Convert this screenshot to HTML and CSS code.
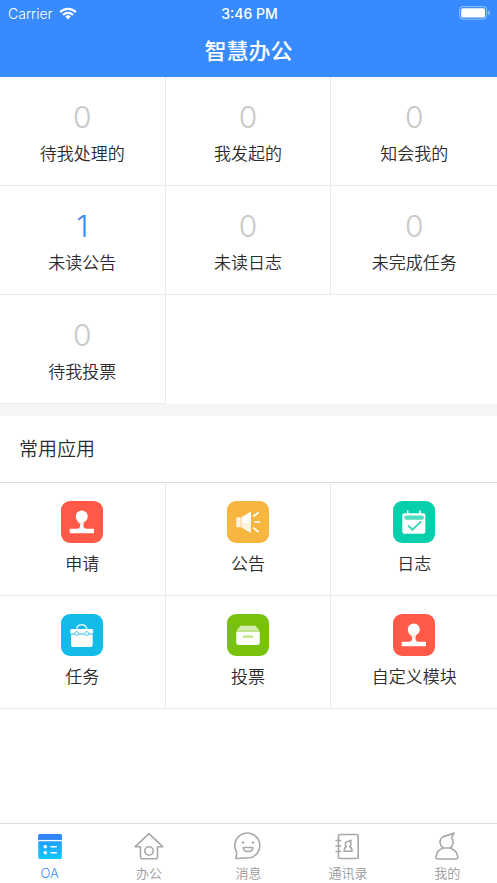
FILE: index.html
```html
<!DOCTYPE html>
<html lang="zh-CN">
<head>
<meta charset="utf-8">
<meta name="viewport" content="width=device-width, initial-scale=1">
<title>智慧办公</title>
<link rel="stylesheet" href="styles.css">
</head>
<body>
<header class="header">
  <div class="status">
    <div class="carrier"><span>Carrier</span>
      <svg width="18" height="13" viewBox="0 0 18 13" fill="none" stroke="#fff" stroke-width="2.3"><path d="M1.2 5.1a11 11 0 0 1 15.6 0M4 8a7 7 0 0 1 10 0"/><path d="M9 12.4 6.2 9.6a4 4 0 0 1 5.6 0z" fill="#fff" stroke="none"/></svg>
    </div>
    <div class="time">3:46 PM</div>
    <svg class="battery" width="32" height="14" viewBox="0 0 32 14"><rect x=".6" y=".6" width="27" height="12.6" rx="3.2" fill="none" stroke="#fff" stroke-opacity=".45"/><rect x="2.2" y="2.2" width="23.8" height="9.4" rx="1.7" fill="#fff"/><path d="M29.3 4.5c2 .8 2 4 0 4.8z" fill="#fff" fill-opacity=".5"/></svg>
  </div>
  <h1 class="title">智慧办公</h1>
</header>
<main class="main">
  <section class="grid stats">
    <a class="cell stat" href="#"><span class="count">0</span><span class="label">待我处理的</span></a>
    <a class="cell stat" href="#"><span class="count">0</span><span class="label">我发起的</span></a>
    <a class="cell stat" href="#"><span class="count">0</span><span class="label">知会我的</span></a>
    <a class="cell stat" href="#"><span class="count active">1</span><span class="label">未读公告</span></a>
    <a class="cell stat" href="#"><span class="count">0</span><span class="label">未读日志</span></a>
    <a class="cell stat" href="#"><span class="count">0</span><span class="label">未完成任务</span></a>
    <a class="cell stat" href="#"><span class="count">0</span><span class="label">待我投票</span></a>
  </section>
  <section class="apps">
    <h2 class="heading">常用应用</h2>
    <div class="grid">
      <a class="cell app" href="#">
        <svg class="app-icon red" viewBox="0 0 42 42"><path d="M8.700 32.300v-4.500h7c2.500 0 3.500-1.300 3.500-3.800 0-1.500-.2-2.400-.8-3.300h4.800c-.6.900-.8 1.800-.8 3.300 0 2.500 1 3.800 3.500 3.800H33v4.500z" fill="#fff"/><circle cx="20.800" cy="15.500" r="6" fill="#fff"/><path d="M14.800 15.500a6 6 0 0 0 8.400 5.500c-.6.800-.8 1.600-.8 3-5-.5-7.600-5-7.600-8.500" fill="#ffe3df"/></svg>
        <span class="label">申请</span></a>
      <a class="cell app" href="#">
        <svg class="app-icon amber" viewBox="0 0 42 42"><path d="M14.500 16.300 24 10.500V32l-9.500-5.700z" fill="#fff"/><path d="M9.300 16.300h4.500v10H9.300zM14.500 22H24v10l-9.500-5.700z" fill="#fef3e1"/><path d="m26.700 15.200 4.300-3.400M28 21h4.700m-6 6 4.300 3.700" stroke="#fff" stroke-width="1.700" stroke-linecap="round"/></svg>
        <span class="label">公告</span></a>
      <a class="cell app" href="#">
        <svg class="app-icon green" viewBox="0 0 42 42"><rect x="9.300" y="12.300" width="23" height="20.400" rx="2" fill="#fff"/><path d="M14.700 10v4M27 10v4" stroke="#fff" stroke-width="1.500" stroke-linecap="round"/><rect x="11.300" y="14.500" width="19.500" height="4.200" rx="1.800" fill="#50debf"/><path d="m15 24.300 4.500 4.400 8.700-8.300" fill="none" stroke="#35d6b2" stroke-width="1.800"/></svg>
        <span class="label">日志</span></a>
      <a class="cell app" href="#">
        <svg class="app-icon blue" viewBox="0 0 42 42"><path d="M15.700 15.200c0-6 10-6 10 0" fill="none" stroke="#d8f4fc" stroke-width="1.500"/><rect x="9.200" y="15" width="23" height="4.700" rx="1.500" fill="#fff"/><path d="M10 20.500h21.700V31a2 2 0 0 1-2 2H12a2 2 0 0 1-2-2z" fill="#fff"/><path d="M10 19.900h21.700" stroke="#7bd8f3" stroke-width="1"/><g fill="#fff" stroke="#4dcaed"><circle cx="15.700" cy="19.500" r="1.900"/><circle cx="25.700" cy="19.500" r="1.900"/></g></svg>
        <span class="label">任务</span></a>
      <a class="cell app" href="#">
        <svg class="app-icon lime" viewBox="0 0 42 42"><path d="M13.700 11.700h14.600l4.400 5H9.300z" fill="#d5edb0"/><path d="M9.300 17.500h23.400V29a2 2 0 0 1-2 2H11.300a2 2 0 0 1-2-2z" fill="#fff"/><rect x="16" y="21.300" width="10" height="2.700" rx=".5" fill="#c9e997"/></svg>
        <span class="label">投票</span></a>
      <a class="cell app" href="#">
        <svg class="app-icon red" viewBox="0 0 42 42"><path d="M8.700 32.300v-4.500h7c2.500 0 3.500-1.300 3.500-3.800 0-1.500-.2-2.400-.8-3.300h4.800c-.6.900-.8 1.800-.8 3.300 0 2.500 1 3.800 3.500 3.800H33v4.500z" fill="#fff"/><circle cx="20.800" cy="15.500" r="6" fill="#fff"/><path d="M14.800 15.500a6 6 0 0 0 8.400 5.500c-.6.800-.8 1.600-.8 3-5-.5-7.600-5-7.600-8.500" fill="#ffe3df"/></svg>
        <span class="label">自定义模块</span></a>
    </div>
  </section>
</main>
<nav class="tabs">
  <a class="tab current" href="#">
    <svg class="tab-icon" viewBox="0 0 30 30"><defs><linearGradient id="oa" x2="0" y2="1"><stop offset="0" stop-color="#2f86ff"/><stop offset=".3" stop-color="#20a1ff"/><stop offset="1" stop-color="#0cc8ff"/></linearGradient></defs><rect x="3.300" y="2" width="23.500" height="25" rx="1.500" fill="url(#oa)"/><path d="M3.300 8V3.500A1.500 1.500 0 0 1 4.800 2h20.500a1.500 1.500 0 0 1 1.500 1.500V8z" fill="#3287ff"/><path d="M3.300 8.600h23.500" stroke="#fff" stroke-width="1.300"/><g fill="#fff"><circle cx="10.300" cy="14.700" r="1.800"/><circle cx="10.300" cy="20.700" r="1.800"/></g><path d="M16 14.700h5.300M16 20.700h5.300" stroke="#fff" stroke-width="1.500" stroke-linecap="round"/></svg>
    <span>OA</span></a>
  <a class="tab" href="#">
    <svg class="tab-icon line" viewBox="0 0 30 30"><path d="M6.500 14.700H1.200L15 1.700l13.800 13h-5.300v10.100a2 2 0 0 1-2 2h-13a2 2 0 0 1-2-2z"/><circle cx="15" cy="19" r="4.200"/></svg>
    <span>办公</span></a>
  <a class="tab" href="#">
    <svg class="tab-icon line" viewBox="0 0 30 30"><path d="M2.800 26.500c1-3 1.100-5 .4-7.300A12.500 12.500 0 1 1 15 26c-4.500-.1-8.300 0-12.200.5z"/><path d="M10.300 15.500h9.500c0 5.300-9.500 5.300-9.500 0z"/><g fill="#a8a8a8" stroke="none"><circle cx="10" cy="10.500" r="1.200"/><circle cx="20" cy="10.500" r="1.200"/></g></svg>
    <span>消息</span></a>
  <a class="tab" href="#">
    <svg class="tab-icon line" viewBox="0 0 30 30"><rect x="5.500" y="2.500" width="19.700" height="24" rx="1.700"/><path d="M3 8.500h4.700M3 14h4.700M3 19.500h4.700M13.300 14.700c-2-2.700-.7-5.200 1.800-5.200L18 8.300c-.3 1-.5 1.600-.2 2.700.5 1.700 0 2.800-1 3.700 1.500.8 2.300 2 2.300 4.500h-8c0-2.500.7-3.700 2.200-4.500z"/></svg>
    <span>通讯录</span></a>
  <a class="tab" href="#">
    <svg class="tab-icon line" viewBox="0 0 30 30"><path d="M11.300 16C7.500 13.800 7 8.800 9.800 5.800 12.500 3 17.500 3.500 22 1c-.3 2-1.200 2.900-2.500 4.200 2.700 3.800 1.700 8.800-1.500 10.800zM11.300 16H18c4.300 1.300 7.300 4.700 7.700 8.700.2 1.700-.5 2.300-2 2.300H6c-1.500 0-2.200-.6-2-2.300.4-4 3-7.400 7.300-8.700z"/></svg>
    <span>我的</span></a>
</nav>
</body>
</html>
```
FILE: styles.css
```css
* { box-sizing: border-box; }

body {
  margin: 0;
  min-height: 100vh;
  display: flex;
  flex-direction: column;
  background: #fff;
  color: #2c2c2c;
  font-family: Inter, "Noto Sans CJK SC", sans-serif;
  font-weight: 350;
}

a { color: inherit; text-decoration: none; }

.header {
  padding-bottom: 9px;
  background: #388bff;
  color: #fff;
}

.status {
  display: grid;
  grid-template-columns: 1fr auto 1fr;
  align-items: center;
  height: 26px;
  padding: 0 6px 0 8px;
  font-size: 14px;
}

.carrier { display: flex; align-items: center; gap: 6px; }
.time { font-weight: 500; }
.battery { justify-self: end; }

.title {
  margin: 0;
  padding-top: 8px;
  font-size: 22px;
  line-height: 34px;
  font-weight: 500;
  text-align: center;
}

.main { flex: 1; }

.grid {
  display: grid;
  grid-template-columns: repeat(3, 1fr);
}

.cell {
  display: flex;
  flex-direction: column;
  align-items: center;
  border-right: 1px solid #ebebeb;
  border-bottom: 1px solid #ebebeb;
}

.cell:nth-child(3n) { border-right: 0; }

.stats { border-bottom: 12px solid #f5f5f5; }

.stat { gap: 7px; padding: 22px 0 19px; }

.count {
  font-size: 30px;
  line-height: 36px;
  color: #c8c8c8;
}

.count.active { color: #388bff; }

.label { font-size: 17px; line-height: 24px; }

.heading {
  margin: 0;
  padding: 2px 19px 0;
  border-bottom: 1px solid #dcdcdc;
  font-size: 19px;
  line-height: 64px;
  font-weight: 350;
}

.app { gap: 9px; padding: 18px 0 19px; }

.app-icon { width: 42px; height: 42px; border-radius: 9px; }
.red { background: #ff5947; }
.amber { background: #f6b63f; }
.green { background: #06d0ab; }
.blue { background: #12bbea; }
.lime { background: #78c20e; }

.tabs {
  position: sticky;
  bottom: 0;
  display: grid;
  grid-template-columns: repeat(5, 1fr);
  border-top: 1px solid #dcdcdc;
  background: #fff;
}

.tab {
  display: flex;
  flex-direction: column;
  align-items: center;
  gap: 1px;
  padding: 8px 0 0;
  color: #999;
  font-size: 13px;
  line-height: 20px;
}

.tab.current { color: #388bff; }
.tab-icon { width: 30px; height: 30px; }

.line {
  fill: none;
  stroke: #a8a8a8;
  stroke-width: 1.6px;
  stroke-linejoin: round;
  stroke-linecap: round;
}
```
